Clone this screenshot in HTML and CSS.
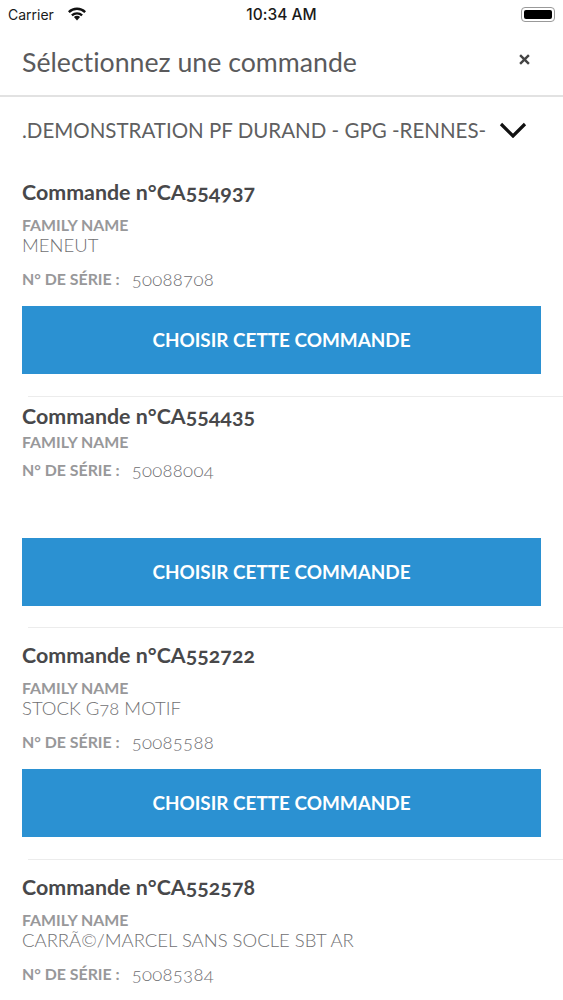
FILE: index.html
```html
<!DOCTYPE html>
<html lang="fr">
<head>
<meta charset="utf-8">
<title>Sélectionnez une commande</title>
<link rel="stylesheet" href="styles.css">
</head>
<body>
<div class="status">
  <div class="status-left">
    <span>Carrier</span>
    <svg class="wifi" viewBox="0 0 20 15" width="20" height="15"><path d="M10 14.6 6.9 11a4.4 4.4 0 0 1 6.2 0Z" fill="#111"/><path d="M1 5.2a13 13 0 0 1 18 0l-1.7 1.9a10.4 10.4 0 0 0-14.6 0Z" fill="#111"/><path d="M4.1 8.5a8.6 8.6 0 0 1 11.8 0l-1.6 1.8a6.2 6.2 0 0 0-8.6 0Z" fill="#111"/></svg>
  </div>
  <div class="status-time">10:34 AM</div>
  <div class="battery"><span class="battery-fill"></span></div>
</div>
<header class="head">
  <h1 class="head-title">Sélectionnez une commande</h1>
  <svg class="close" viewBox="0 0 10 10" width="11" height="11"><path d="M1 1 9 9M9 1 1 9" stroke="#444" stroke-width="2.2" fill="none"/></svg>
</header>
<div class="picker">
  <span class="picker-text">.DEMONSTRATION PF DURAND - GPG -RENNES-</span>
  <svg class="chevron" viewBox="0 0 28 16" width="28" height="16"><path d="M2 2 14 14 26 2" stroke="#111" stroke-width="3.2" fill="none"/></svg>
</div>
<main class="list">
  <section class="order order-first">
    <h2 class="order-title">Commande n°CA554937</h2>
    <div class="label">FAMILY NAME</div>
    <div class="value">MENEUT</div>
    <div class="serial"><span class="label">N° DE SÉRIE :</span><span class="number">50088708</span></div>
    <button class="choose">CHOISIR CETTE COMMANDE</button>
  </section>
  <section class="order order-empty">
    <h2 class="order-title">Commande n°CA554435</h2>
    <div class="label">FAMILY NAME</div>
    <div class="serial"><span class="label">N° DE SÉRIE :</span><span class="number">50088004</span></div>
    <button class="choose">CHOISIR CETTE COMMANDE</button>
  </section>
  <section class="order">
    <h2 class="order-title">Commande n°CA552722</h2>
    <div class="label">FAMILY NAME</div>
    <div class="value">STOCK G78 MOTIF</div>
    <div class="serial"><span class="label">N° DE SÉRIE :</span><span class="number">50085588</span></div>
    <button class="choose">CHOISIR CETTE COMMANDE</button>
  </section>
  <section class="order order-last">
    <h2 class="order-title">Commande n°CA552578</h2>
    <div class="label">FAMILY NAME</div>
    <div class="value">CARRÃ©/MARCEL SANS SOCLE SBT AR</div>
    <div class="serial"><span class="label">N° DE SÉRIE :</span><span class="number">50085384</span></div>
  </section>
</main>
</body>
</html>
```
FILE: styles.css
```css
* { box-sizing: border-box; }
html, body { margin: 0; padding: 0; }
body {
  width: 563px;
  height: 1000px;
  overflow: hidden;
  background: #fff;
  font-family: Lato, "Open Sans", sans-serif;
  font-variant-numeric: oldstyle-nums;
  font-variant-ligatures: none;
  color: #4a4a4c;
}
.status {
  height: 29px;
  padding: 0 8px;
  display: grid;
  grid-template-columns: 1fr auto 1fr;
  align-items: center;
  font-family: Inter, "Liberation Sans", sans-serif;
  font-size: 14px;
  font-variant-numeric: normal;
  color: #1a1a1a;
}
.status-left { display: flex; align-items: center; gap: 13px; }
.wifi { margin-top: -2px; }
.status-time { font-weight: 500; font-size: 15.5px; }
.battery {
  justify-self: end;
  width: 34px;
  height: 15px;
  border: 1px solid #999;
  border-radius: 4px;
  padding: 2px;
}
.battery-fill { display: block; height: 100%; background: #000; border-radius: 2px; }
.head {
  height: 68px;
  border-bottom: 2px solid #e2e2e2;
  padding: 0 33px 0 22px;
  display: flex;
  align-items: center;
  justify-content: space-between;
}
.head-title { margin: 0; font-size: 26.7px; font-weight: 400; color: #5a5a5c; }
.close { margin-top: -6px; }
.picker {
  height: 70px;
  padding: 0 36px 4px 22px;
  display: flex;
  align-items: center;
  justify-content: space-between;
}
.picker-text { font-size: 20.5px; font-weight: 400; color: #5f5f61; white-space: nowrap; }
.list { display: block; }
.order { padding: 15px 22px 0; position: relative; height: 231.5px; }
.order::before {
  content: "";
  position: absolute;
  left: 28px;
  right: 0;
  top: -1px;
  height: 1px;
  background: #ececec;
}
.order-first { padding-top: 13px; height: 230px; }
.order-first::before { display: none; }
.order-title { margin: 0; font-size: 21.4px; line-height: 24px; font-weight: 700; color: #48484a; }
.label { font-size: 15.9px; line-height: 18px; font-weight: 700; color: #98989a; margin-top: 12px; }
.value { font-size: 18.5px; line-height: 20px; font-weight: 300; color: #707072; margin-top: 1px; }
.serial { display: flex; align-items: center; gap: 12px; margin-top: 14px; height: 20px; }
.serial .label { margin-top: 0; }
.number { font-size: 18.5px; letter-spacing: 0.3px; font-weight: 300; color: #6c6c6f; }
.choose {
  display: block;
  width: 519px;
  height: 68px;
  margin-top: 17px;
  padding: 0 0 2px;
  border: 0;
  background: #2b91d2;
  color: #fff;
  font-family: inherit;
  font-size: 18.9px;
  font-weight: 700;
}
.order-empty { padding-top: 7px; height: 231px; }
.order-empty .label { margin-top: 5px; }
.order-empty .serial { margin-top: 9px; }
.order-empty .serial .label { margin-top: 0; }
.order-empty .choose { margin-top: 58px; }
.order-last { height: 140px; }
```
